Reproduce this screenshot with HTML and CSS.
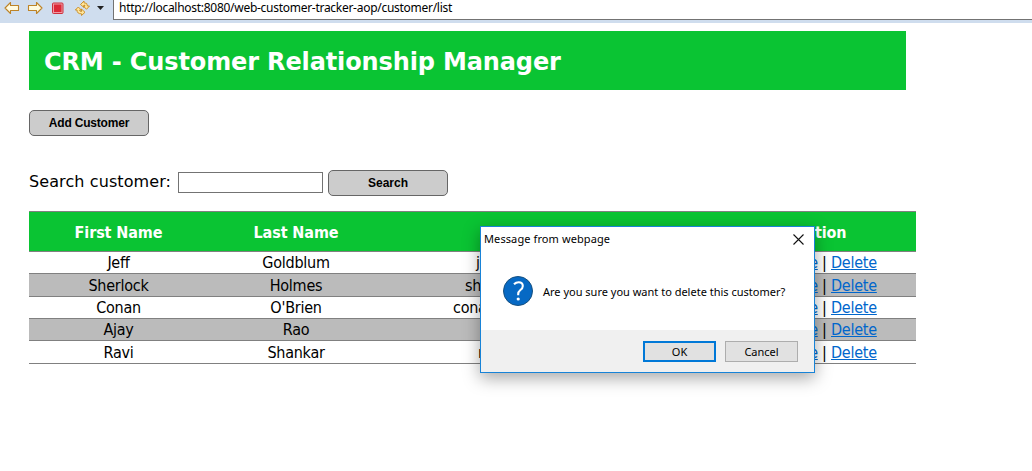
FILE: index.html
```html
<!DOCTYPE html>
<html lang="en">
<head>
<meta charset="utf-8">
<title>List Customers</title>
<link rel="stylesheet" href="styles.css">
</head>
<body>
<div class="toolbar">
  <svg class="tools" width="113" height="23" viewBox="0 0 113 23" aria-hidden="true">
    <g fill="#fffbe0" stroke="#bd8428" stroke-width="1.1" stroke-linejoin="round">
      <path d="M5 8 L10.5 2.5 V5.5 H18.5 V10.5 H10.5 V13.5 Z"/>
      <path d="M42 8 L36.5 2.5 V5.5 H28.5 V10.5 H36.5 V13.5 Z"/>
    </g>
    <rect x="52.5" y="3" width="10.5" height="10.5" rx="1" fill="#ef9aa4" stroke="#ce303c"/>
    <rect x="54" y="4.500" width="7.500" height="7.500" fill="#dc2837"/>
    <g fill="#ffe59a" stroke="#c88a20" stroke-width=".9" stroke-linejoin="round">
      <path d="M80.500 4.500 L84 1 V2.800 Q87.500 2.500 87.500 6 H89.500 L86.500 9.300 L83.300 6 H85 Q85 5 84 5 V7.500 Z"/>
      <path d="M75.300 10 L78.300 7 L81.300 10 H79.600 Q79.600 11.500 81.500 11.500 V9 L85 12.300 L81.500 15.500 V13.800 Q77 14 77 10 Z"/>
    </g>
    <path d="M97 6 H104 L100.500 10 Z" fill="#222"/>
  </svg>
  <div class="address">http://localhost:8080/web-customer-tracker-aop/customer/list</div>
</div>
<main class="page">
  <header class="banner"><h2>CRM - Customer Relationship Manager</h2></header>
  <button class="btn add">Add Customer</button>
  <form class="search">
    <label for="q">Search customer:</label>
    <input id="q" type="text">
    <button class="btn" type="button">Search</button>
  </form>
  <table class="customers">
    <colgroup><col class="c-first"><col class="c-last"><col class="c-email"><col class="c-action"></colgroup>
    <thead><tr><th>First Name</th><th>Last Name</th><th>Email</th><th>Action</th></tr></thead>
    <tbody>
      <tr><td>Jeff</td><td>Goldblum</td><td class="email">jeff@luv2code.com</td><td><a href="#">Update</a> | <a href="#">Delete</a></td></tr>
      <tr><td>Sherlock</td><td>Holmes</td><td class="email">sherlock@luv2code.com</td><td><a href="#">Update</a> | <a href="#">Delete</a></td></tr>
      <tr><td>Conan</td><td>O'Brien</td><td class="email">conan@luv2code.com</td><td><a href="#">Update</a> | <a href="#">Delete</a></td></tr>
      <tr><td>Ajay</td><td>Rao</td><td class="email">ajay@luv2code.com</td><td><a href="#">Update</a> | <a href="#">Delete</a></td></tr>
      <tr><td>Ravi</td><td>Shankar</td><td class="email">ravi@luv2code.com</td><td><a href="#">Update</a> | <a href="#">Delete</a></td></tr>
    </tbody>
  </table>
</main>
<div class="dialog" role="dialog">
  <div class="dialog-title"><span>Message from webpage</span>
    <svg width="11" height="11" viewBox="0 0 11 11" aria-hidden="true"><path d="M.5 .5 L10.500 10.500 M10.500 .5 L.5 10.500" stroke="#111" stroke-width="1.1"/></svg>
  </div>
  <div class="dialog-body">
    <svg width="30" height="30" viewBox="0 0 30 30" aria-hidden="true">
      <circle cx="15" cy="15" r="14.500" fill="#0669c4" stroke="#17507f"/>
      <path d="M11 8.200 Q13 6.200 15.700 6.200 Q19.800 6.200 19.800 10 Q19.800 12.200 17.400 14 Q15.200 15.800 15.200 18 V19.300" fill="none" stroke="#fff" stroke-width="2.100"/>
      <circle cx="15.200" cy="23" r="1.600" fill="#fff"/>
    </svg>
    <span>Are you sure you want to delete this customer?</span>
  </div>
  <div class="dialog-foot"><button class="dbtn primary">OK</button><button class="dbtn">Cancel</button></div>
</div>
</body>
</html>
```
FILE: styles.css
```css
* { box-sizing: border-box; }
body { margin: 0; height: 471px; overflow: hidden; background: #fff; color: #000; font-family: "DejaVu Sans", sans-serif; font-size: 16px; }

.toolbar { display: flex; align-items: flex-start; height: 23px; background: #cfddee; }
.tools { flex: none; }
.address { flex: 1; height: 20px; padding-left: 5px; background: #fff; border-left: 1px solid #737373; border-bottom: 1px solid #737373; font: 12px/16px "Noto Sans", sans-serif; letter-spacing: -.28px; white-space: nowrap; }

.page { padding: 8px 0 0 29px; }
.banner { display: flex; align-items: center; width: 877px; height: 59px; margin-bottom: 20px; padding: 2px 0 0 15px; background: #0ac433; color: #fff; }
.banner h2 { margin: 0; font-size: 24px; line-height: 30px; letter-spacing: -.13px; white-space: nowrap; }

.btn { display: block; width: 120px; height: 26px; padding: 0; background: #ccc; border: 1px solid #666; border-radius: 5px; color: #000; font: bold 12px/24px "Liberation Sans", sans-serif; }
.add { letter-spacing: -.2px; }
.search { display: flex; align-items: center; height: 26px; margin: 34px 0 15px; }
.search label { width: 149px; padding-bottom: 2px; line-height: 20px; letter-spacing: .1px; white-space: nowrap; }
.search input { width: 145px; height: 21px; margin: 0 5px 1px 0; padding: 0 2px; border: 1px solid #737373; background: #fff; }

.customers { width: 887px; table-layout: fixed; border-collapse: separate; border-spacing: 0; font-family: "DejaVu Sans Condensed", "DejaVu Sans", sans-serif; font-stretch: condensed; text-align: center; }
.c-first { width: 179px; }
.c-last { width: 176px; }
.c-email { width: 340px; }
.c-action { width: 192px; }
.customers th { height: 41px; padding: 2px 0 0; background: #0ac433; color: #fff; border-top: 1px solid gray; border-bottom: 1px solid gray; letter-spacing: -.1px; }
.customers th:last-child { padding-left: 2px; }
.customers td { height: 22px; padding: 1px 0 0; line-height: 20px; border-bottom: 1px solid gray; letter-spacing: -.25px; white-space: nowrap; }
.customers tr:nth-child(2) td, .customers tr:nth-child(5) td { height: 23px; }
.customers tbody tr:nth-child(even) { background: #bbb; }
.customers a { color: #06c; }
.customers .email { text-align: left; padding-left: 92px; }
.customers tr:nth-child(2) .email { padding-left: 81px; }
.customers tr:nth-child(3) .email { padding-left: 69px; }
.customers tr:nth-child(4) .email { padding-left: 100px; }
.customers tr:nth-child(5) .email { padding-left: 94px; }
.customers td:last-child { padding-left: 4px; }

.dialog { position: absolute; left: 480px; top: 226px; display: flex; flex-direction: column; width: 335px; height: 147px; background: #fff; border: 1px solid #1883d7; box-shadow: 0 5px 16px rgba(0, 0, 0, .35); color: #000; font: 11px/16px "Noto Sans", sans-serif; }
.dialog-title { display: flex; justify-content: space-between; align-items: flex-start; height: 49px; padding: 4px 10px 0 3px; letter-spacing: .1px; }
.dialog-title svg { margin-top: 3px; }
.dialog-body { display: flex; align-items: center; gap: 10px; height: 30px; padding-left: 22px; white-space: nowrap; }
.dialog-body span { padding-top: 2px; }
.dialog-foot { display: flex; justify-content: flex-end; gap: 9px; height: 42px; margin-top: auto; padding: 11px 16px 0 0; background: #f0f0f0; }
.dbtn { width: 73px; height: 21px; padding: 0; background: #e1e1e1; border: 1px solid #adadad; color: #000; font: 11px/17px "Noto Sans", sans-serif; }
.primary { border: 2px solid #0078d7; }
```
